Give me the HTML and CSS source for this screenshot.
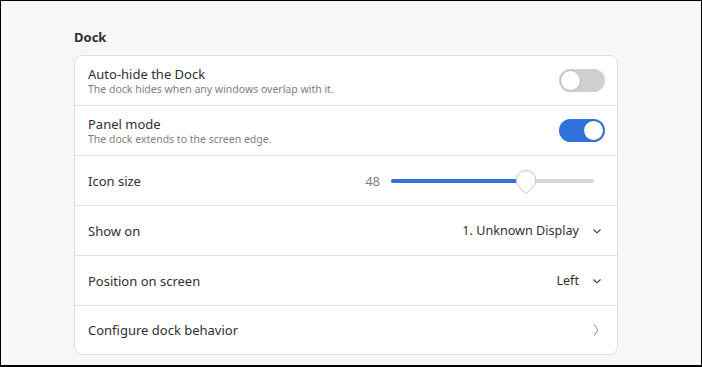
FILE: index.html
```html
<!DOCTYPE html>
<html lang="en">
<head>
  <meta charset="UTF-8" />
  <title>Dock</title>
  <link rel="stylesheet" href="styles.css">
</head>
<body>
  <div class="frame">
    <div class="page">
      <h2 class="section-title">Dock</h2>

      <div class="list">
        <div class="row">
          <div class="row-text">
            <div class="row-title">Auto-hide the Dock</div>
            <div class="row-subtitle">The dock hides when any windows overlap with it.</div>
          </div>
          <div class="switch"><div class="knob"></div></div>
        </div>

        <div class="row">
          <div class="row-text">
            <div class="row-title">Panel mode</div>
            <div class="row-subtitle">The dock extends to the screen edge.</div>
          </div>
          <div class="switch on"><div class="knob"></div></div>
        </div>

        <div class="row">
          <div class="row-title">Icon size</div>
          <div class="slider-box">
            <span class="slider-value">48</span>
            <div class="slider">
              <div class="slider-fill" style="width: 66%"></div>
              <svg class="slider-handle" viewBox="0 0 22 26">
                <path d="M11 24.5L4.6 18.6A9.8 9.8 0 1 1 17.4 18.6Z" fill="#fff" stroke="#c4c4c4" stroke-width="1"/>
              </svg>
            </div>
          </div>
        </div>

        <div class="row">
          <div class="row-title">Show on</div>
          <div class="combo">
            <span>1. Unknown Display</span>
            <svg class="chevron" viewBox="0 0 12 12"><path d="M2.5 4.5L6 7.8L9.5 4.5" fill="none" stroke="#333" stroke-width="1.1"/></svg>
          </div>
        </div>

        <div class="row">
          <div class="row-title">Position on screen</div>
          <div class="combo">
            <span>Left</span>
            <svg class="chevron" viewBox="0 0 12 12"><path d="M2.5 4.5L6 7.8L9.5 4.5" fill="none" stroke="#333" stroke-width="1.1"/></svg>
          </div>
        </div>

        <div class="row">
          <div class="row-title">Configure dock behavior</div>
          <svg class="arrow" viewBox="0 0 12 16"><path d="M4 2.5L8 8L4 13.5" fill="none" stroke="#888" stroke-width="1"/></svg>
        </div>
      </div>
    </div>
  </div>
</body>
</html>
```

FILE: styles.css
```css
:root {
  --bg-color: #f7f7f7;
  --card-bg: #ffffff;
  --border-color: #e0e0e0;
  --text-primary: #2f2f2f;
  --text-secondary: #808080;
  --accent: #3071db;
}

html, body {
  margin: 0;
  height: 100%;
}

body {
  font-family: 'Noto Sans', 'Open Sans', sans-serif;
  color: var(--text-primary);
}

.frame {
  box-sizing: border-box;
  width: 702px;
  height: 367px;
  border: 1px solid #000;
  border-bottom-width: 2px;
  background: var(--bg-color);
  overflow: hidden;
}

.page {
  width: 544px;
  padding: 28px 0 0 73px;
}

.section-title {
  margin: 0 0 10px 0;
  font-size: 13px;
  font-weight: 700;
  line-height: 16px;
}

.list {
  background: var(--card-bg);
  border: 1px solid var(--border-color);
  border-radius: 8px;
}

.row {
  display: flex;
  align-items: center;
  justify-content: space-between;
  height: 49px;
  padding: 0 12px 0 13px;
  border-bottom: 1px solid var(--border-color);
}

.row:last-child {
  border-bottom: none;
  height: 48px;
}

.row-text {
  display: flex;
  flex-direction: column;
}

.row-title {
  font-size: 13px;
  line-height: 16px;
}

.row-subtitle {
  font-size: 10.5px;
  line-height: 14px;
  color: var(--text-secondary);
}

.switch {
  position: relative;
  width: 46px;
  height: 23px;
  border-radius: 12px;
  background: #cfcfcf;
  box-sizing: border-box;
}

.switch .knob {
  position: absolute;
  top: 1px;
  left: 1px;
  width: 21px;
  height: 21px;
  box-sizing: border-box;
  border-radius: 50%;
  background: #fff;
  border: 1px solid #b8b8b8;
}

.switch.on {
  background: var(--accent);
}

.switch.on .knob {
  left: 24px;
  border-color: #2a63c0;
}

.slider-box {
  display: flex;
  align-items: center;
  gap: 11px;
}

.slider-value {
  font-size: 13px;
  color: var(--text-secondary);
}

.slider {
  position: relative;
  width: 203px;
  height: 4px;
  border-radius: 2px;
  background: #d6d6d6;
  margin-right: 11px;
}

.slider-fill {
  height: 100%;
  border-radius: 2px;
  background: var(--accent);
}

.slider-handle {
  position: absolute;
  left: calc(66% - 10px);
  top: -10px;
  width: 22px;
  height: 26px;
}

.combo {
  display: flex;
  align-items: center;
  gap: 12px;
  font-size: 12.6px;
}

.chevron {
  width: 12px;
  height: 12px;
  margin-right: 2px;
}

.arrow {
  width: 12px;
  height: 16px;
  margin-right: 3px;
}
```
